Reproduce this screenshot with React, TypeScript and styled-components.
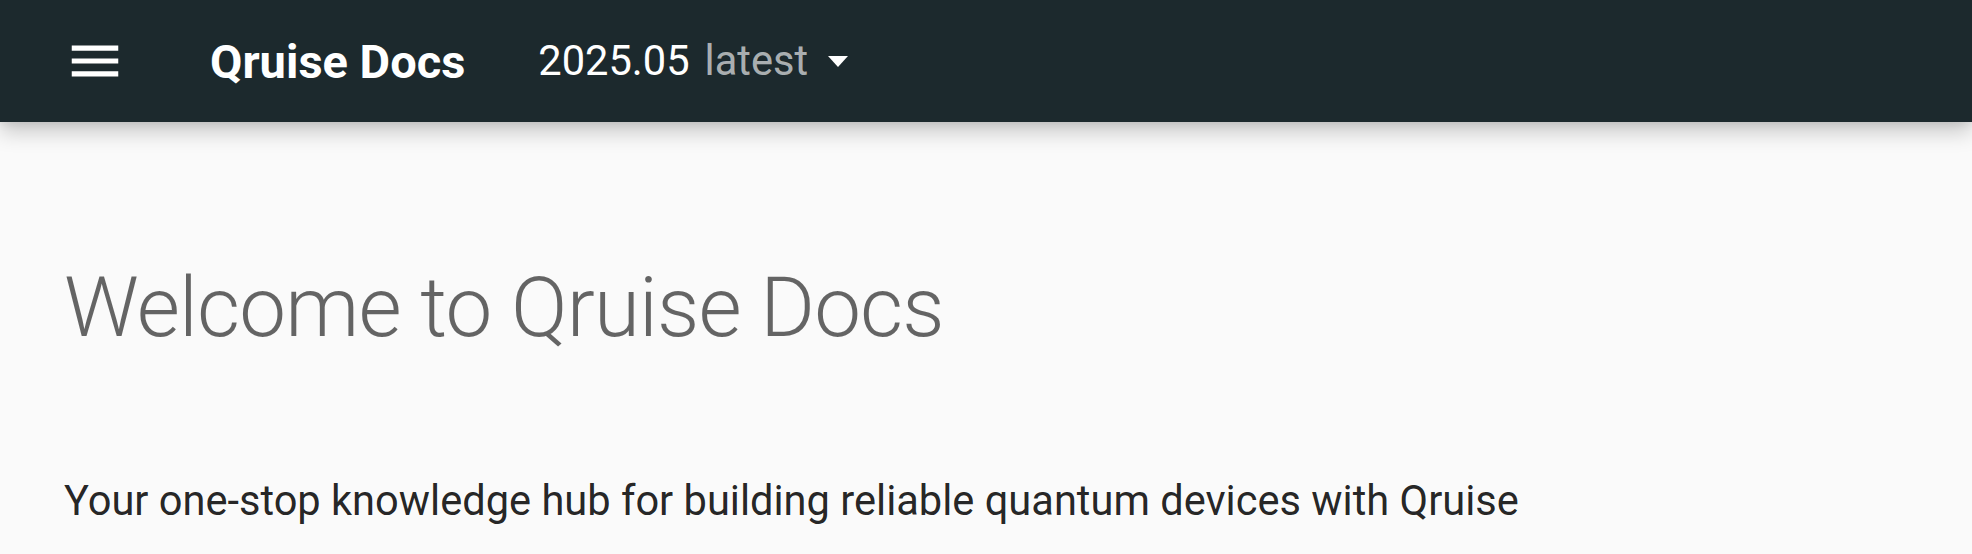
import styled, { createGlobalStyle } from 'styled-components';

const GlobalStyle = createGlobalStyle`
  html, body {
    margin: 0;
    padding: 0;
    background: #fafafa;
    font-family: Roboto, "Noto Sans", "Liberation Sans", sans-serif;
    -webkit-font-smoothing: antialiased;
  }
`;

export default function App() {
  return (
    <>
      <GlobalStyle />
      <Header>
        <MenuButton aria-label="Open navigation">
          <svg viewBox="0 0 24 24" width="62" height="62">
            <path fill="currentColor" d="M3 6h18v2H3V6m0 5h18v2H3v-2m0 5h18v2H3v-2z" />
          </svg>
        </MenuButton>
        <Title>Qruise Docs</Title>
        <Version>
          <VersionNumber>2025.05</VersionNumber>
          <VersionAlias>latest</VersionAlias>
          <Caret viewBox="0 0 20 11" width="20" height="11">
            <path fill="currentColor" d="M0 0h20L10 11z" />
          </Caret>
        </Version>
      </Header>
      <Main>
        <Heading>Welcome to Qruise Docs</Heading>
        <Lead>
          Your one-stop knowledge hub for building reliable quantum devices with Qruise
        </Lead>
      </Main>
    </>
  );
}

const Header = styled.header`
  position: relative;
  z-index: 1;
  display: flex;
  align-items: center;
  height: 122px;
  padding-left: 64px;
  background: #1c292d;
  color: #fff;
  box-shadow: 0 0 10px rgba(0, 0, 0, 0.1), 0 10px 20px rgba(0, 0, 0, 0.2);
`;

const MenuButton = styled.button`
  display: flex;
  padding: 0;
  border: 0;
  background: none;
  color: #fff;
  cursor: pointer;
`;

const Title = styled.div`
  margin-left: 84px;
  font-size: 47px;
  font-weight: 700;
  line-height: 1;
`;

const Version = styled.div`
  display: flex;
  align-items: center;
  margin-left: 73px;
  font-size: 41.6px;
  line-height: 1;
`;

const VersionNumber = styled.span`
  color: #fff;
`;

const VersionAlias = styled.span`
  margin-left: 15px;
  color: rgba(255, 255, 255, 0.65);
`;

const Caret = styled.svg`
  margin-left: 20px;
  color: #fff;
`;

const Main = styled.main`
  padding: 132px 64px 0;
`;

const Heading = styled.h1`
  margin: 0 0 105px;
  font-size: 83.5px;
  font-weight: 300;
  line-height: 1.3;
  letter-spacing: -0.01em;
  color: rgba(0, 0, 0, 0.6);
`;

const Lead = styled.p`
  margin: 0;
  font-size: 41.6px;
  line-height: 1.6;
  color: rgba(0, 0, 0, 0.87);
`;
